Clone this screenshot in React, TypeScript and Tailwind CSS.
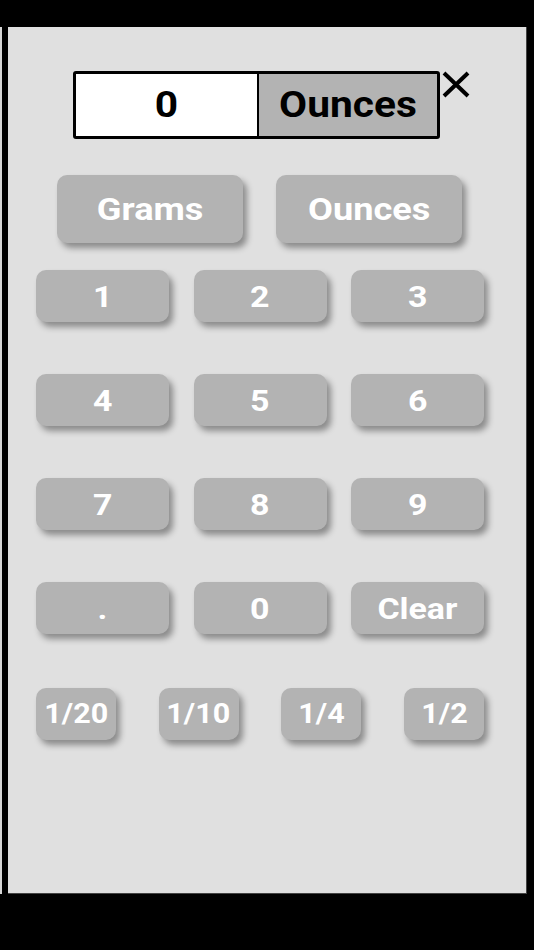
import React from 'react';

const digitRows = [
  ['1', '2', '3'],
  ['4', '5', '6'],
  ['7', '8', '9'],
  ['.', '0', 'Clear'],
];

const fractions = ['1/20', '1/10', '1/4', '1/2'];

const btn =
  'bg-[#b3b3b3] text-white font-bold rounded-[10px] shadow-[4px_5px_6px_rgba(0,0,0,0.38)] flex items-center justify-center';

function Label({ children }: { children: React.ReactNode }) {
  // the glyphs in the reference are a bit wider than plain Roboto
  return <span className="inline-block scale-x-[1.13]">{children}</span>;
}

export default function App() {
  return (
    <div
      className="w-[534px] h-[950px] bg-black pt-[27px] flex items-start"
      style={{ fontFamily: 'Roboto, "Liberation Sans", sans-serif' }}
    >
      <div className="w-[2px] h-[867px] bg-[#d6d6d6]" />
      <div className="ml-[6px] w-[519px] h-[867px] bg-[#e0e0e0] border-r border-b border-[#444] flex flex-col pt-[44px]">
        {/* display */}
        <div className="flex items-start pl-[65px]">
          <div className="w-[367px] h-[68px] border-[3px] border-black rounded-[3px] flex overflow-hidden">
            <div className="w-[181px] bg-white flex items-center justify-center text-[36px] font-bold text-black">
              <Label>0</Label>
            </div>
            <div className="w-[2px] bg-black" />
            <div className="flex-1 bg-[#b3b3b3] flex items-center justify-center text-[36px] font-bold text-black">
              <Label>Ounces</Label>
            </div>
          </div>
          <svg width="30" height="27" viewBox="0 0 30 27" className="ml-[1px]">
            <path d="M3 2 L27 25 M27 2 L3 25" stroke="black" strokeWidth="4" />
          </svg>
        </div>

        {/* unit buttons */}
        <div className="flex gap-[33px] pl-[49px] mt-[36px]">
          <div className={`${btn} w-[186px] h-[68px] text-[32px]`}>
            <Label>Grams</Label>
          </div>
          <div className={`${btn} w-[186px] h-[68px] text-[32px]`}>
            <Label>Ounces</Label>
          </div>
        </div>

        {/* keypad */}
        <div className="flex flex-col gap-[52px] pl-[28px] mt-[27px]">
          {digitRows.map((row, i) => (
            <div key={i} className="flex gap-[24.5px]">
              {row.map((k) => (
                <div key={k} className={`${btn} w-[133px] h-[52px] text-[30px]`}>
                  <Label>{k}</Label>
                </div>
              ))}
            </div>
          ))}
          <div className="flex gap-[42.7px] mt-[2px]">
            {fractions.map((f) => (
              <div key={f} className={`${btn} w-[80px] h-[52px] text-[27px]`}>
                <Label>{f}</Label>
              </div>
            ))}
          </div>
        </div>
      </div>
    </div>
  );
}
